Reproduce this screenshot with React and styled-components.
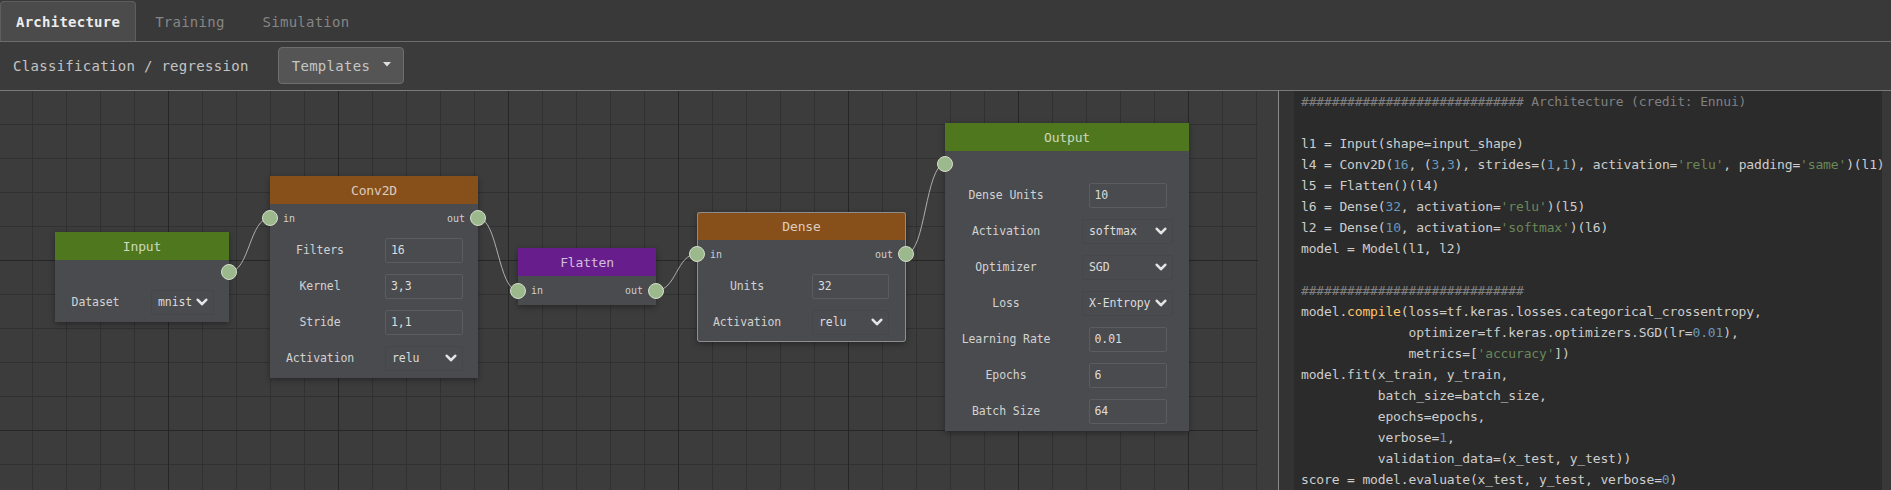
import React from "react"
import styled, { createGlobalStyle } from "styled-components"

const GlobalStyle = createGlobalStyle`
  html, body {
    margin: 0;
    padding: 0;
    background: #3a3a3a;
  }
  body {
    font-family: "DejaVu Sans Mono", "Liberation Mono", monospace;
  }
  #root {
    width: 1891px;
    height: 490px;
    overflow: hidden;
  }
`

const MONO = `"DejaVu Sans Mono", "Liberation Mono", monospace`

const nodes = [
  {
    id: "input",
    title: "Input",
    color: "#4f781e",
    x: 55,
    y: 141,
    w: 174,
    portRow: 24,
    out: "",
    col: 63,
    pr: 15,
    fields: [{ label: "Dataset", value: "mnist", select: true }],
  },
  {
    id: "conv",
    title: "Conv2D",
    color: "#874f1a",
    x: 270,
    y: 85,
    w: 208,
    portRow: 28,
    in: "in",
    out: "out",
    col: 78,
    pr: 15,
    fields: [
      { label: "Filters", value: "16" },
      { label: "Kernel", value: "3,3" },
      { label: "Stride", value: "1,1" },
      { label: "Activation", value: "relu", select: true },
    ],
  },
  {
    id: "flatten",
    title: "Flatten",
    color: "#671e8c",
    x: 518,
    y: 157,
    w: 138,
    portRow: 29,
    in: "in",
    out: "out",
    fields: [],
  },
  {
    id: "dense",
    title: "Dense",
    color: "#874f1a",
    x: 697,
    y: 121,
    w: 209,
    portRow: 28,
    in: "in",
    out: "out",
    col: 77,
    pr: 17,
    selected: true,
    fields: [
      { label: "Units", value: "32" },
      { label: "Activation", value: "relu", select: true },
    ],
  },
  {
    id: "output",
    title: "Output",
    color: "#4f781e",
    x: 945,
    y: 32,
    w: 244,
    portRow: 26,
    in: "",
    col: 91,
    inputW: 78,
    pr: 16,
    fields: [
      { label: "Dense Units", value: "10" },
      { label: "Activation", value: "softmax", select: true },
      { label: "Optimizer", value: "SGD", select: true },
      { label: "Loss", value: "X-Entropy", select: true },
      { label: "Learning Rate", value: "0.01" },
      { label: "Epochs", value: "6" },
      { label: "Batch Size", value: "64" },
    ],
  },
]

const HEADER = 28

const links = [
  ["input", "conv"],
  ["conv", "flatten"],
  ["flatten", "dense"],
  ["dense", "output"],
]

const code = [
  [["c", "############################# Architecture (credit: Ennui)"]],
  [],
  [["t", "l1 = Input(shape=input_shape)"]],
  [
    ["t", "l4 = Conv2D("],
    ["n", "16"],
    ["t", ", ("],
    ["n", "3"],
    ["t", ","],
    ["n", "3"],
    ["t", "), strides=("],
    ["n", "1"],
    ["t", ","],
    ["n", "1"],
    ["t", "), activation="],
    ["s", "'relu'"],
    ["t", ", padding="],
    ["s", "'same'"],
    ["t", ")(l1)"],
  ],
  [["t", "l5 = Flatten()(l4)"]],
  [["t", "l6 = Dense("], ["n", "32"], ["t", ", activation="], ["s", "'relu'"], ["t", ")(l5)"]],
  [["t", "l2 = Dense("], ["n", "10"], ["t", ", activation="], ["s", "'softmax'"], ["t", ")(l6)"]],
  [["t", "model = Model(l1, l2)"]],
  [],
  [["c", "#############################"]],
  [["t", "model."], ["f", "compile"], ["t", "(loss=tf.keras.losses.categorical_crossentropy,"]],
  [["t", "              optimizer=tf.keras.optimizers.SGD(lr="], ["n", "0.01"], ["t", "),"]],
  [["t", "              metrics=["], ["s", "'accuracy'"], ["t", "])"]],
  [["t", "model.fit(x_train, y_train,"]],
  [["t", "          batch_size=batch_size,"]],
  [["t", "          epochs=epochs,"]],
  [["t", "          verbose="], ["n", "1"], ["t", ","]],
  [["t", "          validation_data=(x_test, y_test))"]],
  [["t", "score = model.evaluate(x_test, y_test, verbose="], ["n", "0"], ["t", ")"]],
]

const tokenColors = {
  t: "#cdcdcd",
  c: "#808080",
  n: "#6897bb",
  s: "#6a8759",
  f: "#ffc66d",
}

export default function App() {
  const byId = Object.fromEntries(nodes.map((n) => [n.id, n]))
  const portY = (n) => n.y + HEADER + n.portRow / 2

  return (
    <Page>
      <GlobalStyle />
      <TabBar>
        <Tab $active>Architecture</Tab>
        <Tab>Training</Tab>
        <Tab>Simulation</Tab>
      </TabBar>
      <Toolbar>
        <ModeLabel>Classification / regression</ModeLabel>
        <DropButton>
          Templates
          <Caret />
        </DropButton>
      </Toolbar>
      <Main>
        <CanvasArea>
          <Grid>
            <Wires width="1258" height="399">
              {links.map(([a, b]) => {
                const s = byId[a]
                const t = byId[b]
                const x1 = s.x + s.w
                const y1 = portY(s)
                const x2 = t.x
                const y2 = portY(t)
                const k = (x2 - x1) * 0.5
                return (
                  <path
                    key={a + b}
                    d={`M${x1} ${y1} C${x1 + k} ${y1}, ${x2 - k} ${y2}, ${x2} ${y2}`}
                    fill="none"
                    stroke="#adadad"
                    strokeWidth="1"
                  />
                )
              })}
            </Wires>
            {nodes.map((n) => (
              <Node key={n.id} $x={n.x} $y={n.y} $w={n.w} $selected={n.selected}>
                <NodeHeader $color={n.color}>{n.title}</NodeHeader>
                <PortRow $h={n.portRow}>
                  {n.in !== undefined && <Port $side="left" />}
                  <span>{n.in || ""}</span>
                  <span>{n.out || ""}</span>
                  {n.out !== undefined && <Port $side="right" />}
                </PortRow>
                {n.fields.length > 0 && (
                  <Fields>
                    {n.fields.map((f) => (
                      <FieldRow key={f.label} $col={n.col} $pr={n.pr}>
                        <FieldLabel>{f.label}</FieldLabel>
                        <FieldCell>
                          {f.select ? (
                            <SelectBox $w={n.col}>
                              <span>{f.value}</span>
                              <Chevron />
                            </SelectBox>
                          ) : (
                            <TextBox value={f.value} readOnly $w={n.inputW || n.col} />
                          )}
                        </FieldCell>
                      </FieldRow>
                    ))}
                  </Fields>
                )}
              </Node>
            ))}
          </Grid>
        </CanvasArea>
        <Divider />
        <Gutter />
        <CodePanel>
          {code.map((line, i) => (
            <CodeLine key={i}>
              {line.length === 0
                ? " "
                : line.map(([type, text], j) => (
                    <Tok key={j} $t={type}>
                      {text}
                    </Tok>
                  ))}
            </CodeLine>
          ))}
        </CodePanel>
      </Main>
    </Page>
  )
}

function Caret() {
  return (
    <CaretSvg width="8" height="5" viewBox="0 0 8 5">
      <path d="M0 0 L8 0 L4 4.5 Z" fill="#dedede" />
    </CaretSvg>
  )
}

function Chevron() {
  return (
    <svg width="12" height="9" viewBox="0 0 12 9">
      <polyline
        points="1.8,1.8 6,6.2 10.2,1.8"
        fill="none"
        stroke="#e4e4e4"
        strokeWidth="2.6"
        strokeLinecap="round"
        strokeLinejoin="round"
      />
    </svg>
  )
}

const Page = styled.div`
  width: 1891px;
  height: 490px;
  display: flex;
  flex-direction: column;
  background: #3a3a3a;
  font-family: ${MONO};
  overflow: hidden;
`

const TabBar = styled.div`
  height: 41px;
  display: flex;
  align-items: flex-end;
  background: #393939;
  border-bottom: 1px solid #6c6c6c;
  box-sizing: content-box;
`

const Tab = styled.div`
  height: 40px;
  box-sizing: border-box;
  display: flex;
  align-items: center;
  padding: 0 ${(p) => (p.$active ? "15px" : "18px")};
  font-size: 14px;
  letter-spacing: 0.25px;
  font-weight: ${(p) => (p.$active ? "bold" : "normal")};
  color: ${(p) => (p.$active ? "#ececec" : "#868686")};
  background: ${(p) => (p.$active ? "#4b4b4b" : "transparent")};
  border: 1px solid ${(p) => (p.$active ? "#5e5e5e" : "transparent")};
  border-bottom: none;
  border-radius: 4px 4px 0 0;
`

const Toolbar = styled.div`
  height: 48px;
  display: flex;
  align-items: center;
  gap: 29px;
  padding-left: 13px;
  background: #3b3b3b;
  border-bottom: 1px solid #7a7a7a;
  box-sizing: content-box;
`

const ModeLabel = styled.span`
  font-size: 14px;
  letter-spacing: 0.3px;
  color: #c4c4c4;
`

const DropButton = styled.div`
  height: 37px;
  box-sizing: border-box;
  display: flex;
  align-items: center;
  gap: 13px;
  padding: 0 12px 0 13px;
  margin-top: -1px;
  font-size: 14px;
  letter-spacing: 0.3px;
  color: #c6c6c6;
  background: #555555;
  border: 1px solid #6e6e6e;
  border-radius: 4px;
`

const CaretSvg = styled.svg`
  margin-top: -3px;
`

const Main = styled.div`
  flex: 1;
  display: flex;
  min-height: 0;
`

const CanvasArea = styled.div`
  width: 1278px;
  background: #3c3c3c;
  overflow: hidden;
`

const Grid = styled.div`
  position: relative;
  width: 1258px;
  height: 100%;
  background-color: #3c3c3c;
  background-image: linear-gradient(to right, #262626 1px, transparent 1px),
    linear-gradient(to bottom, #262626 1px, transparent 1px),
    linear-gradient(to right, #313131 1px, transparent 1px),
    linear-gradient(to bottom, #313131 1px, transparent 1px);
  background-size: 170px 170px, 170px 170px, 34px 34px, 34px 34px;
  background-position: 168px 169px, 168px 169px, 32px 33px, 32px 33px;
`

const Wires = styled.svg`
  position: absolute;
  left: 0;
  top: 0;
  pointer-events: none;
`

const Node = styled.div`
  position: absolute;
  left: ${(p) => p.$x}px;
  top: ${(p) => p.$y}px;
  width: ${(p) => p.$w}px;
  box-sizing: border-box;
  background: #4a4b4f;
  box-shadow: 0 2px 6px rgba(0, 0, 0, 0.35);
  border-radius: ${(p) => (p.$selected ? "3px" : "0")};
  outline: ${(p) => (p.$selected ? "1px solid #8e8e8e" : "none")};
  outline-offset: -1px;
`

const NodeHeader = styled.div`
  height: ${HEADER}px;
  display: flex;
  align-items: center;
  justify-content: center;
  background: ${(p) => p.$color};
  color: rgba(255, 255, 255, 0.72);
  font-size: 13px;
  letter-spacing: -0.15px;
`

const PortRow = styled.div`
  position: relative;
  height: ${(p) => p.$h}px;
  display: flex;
  align-items: center;
  justify-content: space-between;
  padding: 0 13px;
  font-size: 10px;
  color: #cfcfcf;
`

const Port = styled.span`
  position: absolute;
  top: 50%;
  ${(p) => (p.$side === "left" ? "left: -8px;" : "right: -8px;")}
  width: 16px;
  height: 16px;
  box-sizing: border-box;
  margin-top: -8px;
  border-radius: 50%;
  background: #9cb98e;
  border: 1px solid #d3dfcb;
`

const Fields = styled.div`
  padding-bottom: 2px;
`

const FieldRow = styled.div`
  height: 36px;
  display: grid;
  grid-template-columns: 1fr ${(p) => p.$col}px;
  column-gap: 15px;
  align-items: center;
  padding-right: ${(p) => p.$pr}px;
`

const FieldLabel = styled.span`
  text-align: center;
  font-size: 11.5px;
  letter-spacing: -0.1px;
  color: #d2d2d2;
`

const FieldCell = styled.div`
  display: flex;
  justify-content: center;
`

const TextBox = styled.input`
  width: ${(p) => p.$w}px;
  height: 25px;
  box-sizing: border-box;
  margin: 0;
  padding: 0 0 0 5px;
  background: #4a4b4f;
  border: 1px solid #5b5c60;
  border-radius: 2px;
  color: #dcdcdc;
  font-family: ${MONO};
  font-size: 11.5px;
  letter-spacing: -0.1px;
  outline: none;
`

const SelectBox = styled.div`
  width: ${(p) => p.$w}px;
  height: 25px;
  box-sizing: border-box;
  display: flex;
  align-items: center;
  justify-content: space-between;
  padding: 0 5px 0 6px;
  background: #4a4b4f;
  border: 1px solid #46474b;
  border-radius: 2px;
  color: #dcdcdc;
  font-size: 11.5px;
  letter-spacing: -0.1px;
  white-space: nowrap;
`

const Divider = styled.div`
  width: 1px;
  background: #8a8a8a;
`

const Gutter = styled.div`
  width: 15px;
  background: #333333;
`

const CodePanel = styled.div`
  width: 597px;
  box-sizing: border-box;
  padding-left: 7px;
  background: #2b2b2b;
  border-right: 9px solid #383838;
  overflow: visible;
  font-size: 13px;
  letter-spacing: -0.15px;
  line-height: 21px;
`

const CodeLine = styled.div`
  white-space: pre;
  height: 21px;
`

const Tok = styled.span`
  color: ${(p) => tokenColors[p.$t]};
`
